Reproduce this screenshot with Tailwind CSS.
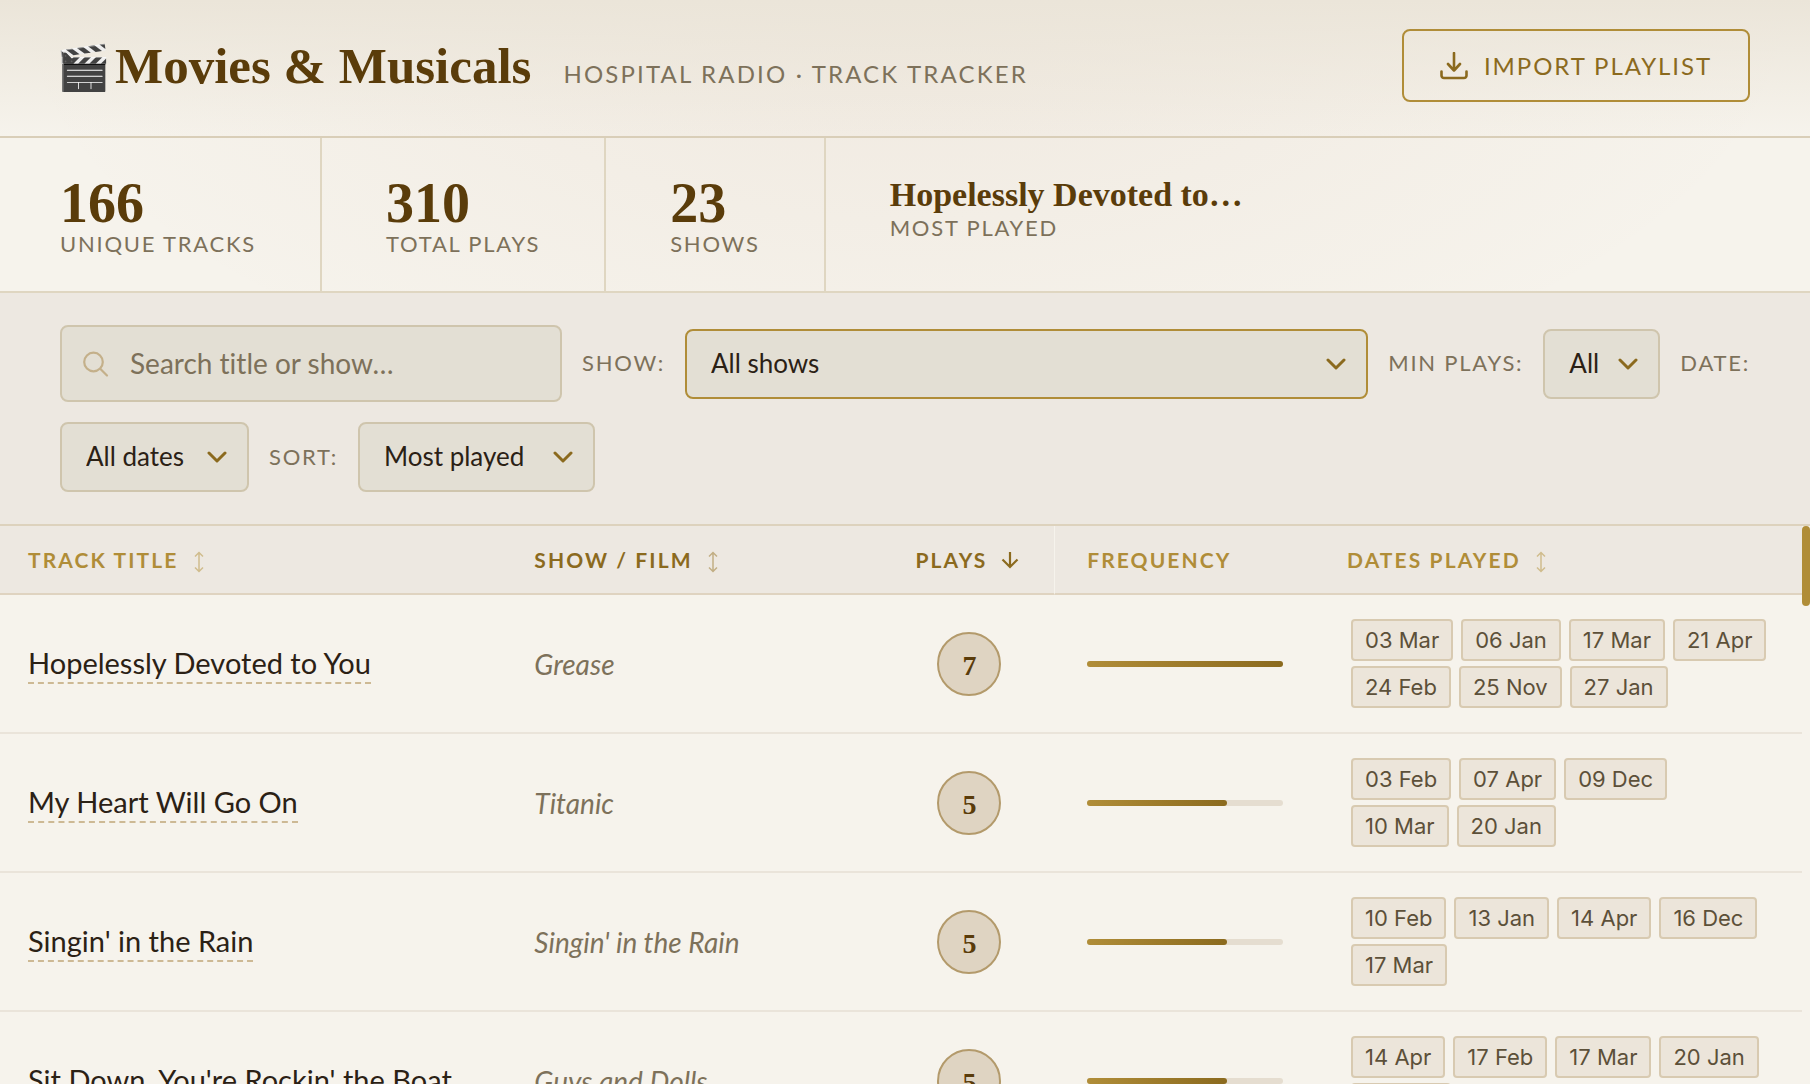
<!DOCTYPE html>
<html lang="en">
<head>
<meta charset="utf-8">
<title>Movies &amp; Musicals</title>
<script src="https://cdn.jsdelivr.net/npm/@tailwindcss/browser@4"></script>
</head>
<body class="flex h-screen flex-col overflow-hidden bg-[#f6f3ec] bg-[radial-gradient(ellipse_50%_40%_at_50%_0%,rgba(160,100,60,0.07)_0%,transparent_100%)] font-['Lato',sans-serif] text-[#2b2115] [font-variant-ligatures:none]">

<header class="flex shrink-0 items-center justify-between border-b-2 border-[#d9ceb8] bg-linear-to-b from-[#ebe5d9] to-transparent px-[60px] pt-[29px] pb-[34px]">
  <div class="flex items-baseline gap-8 pt-1 whitespace-nowrap">
    <h1 class="-ml-1 flex items-baseline gap-1 font-['Liberation_Serif',serif] text-[51px] leading-[60px] font-bold text-[#5a3c0a]"><span class="text-[44px]">🎬</span><span>Movies &amp; Musicals</span></h1>
    <p class="text-2xl tracking-[0.09em] text-[#7d715a]">HOSPITAL RADIO · TRACK TRACKER</p>
  </div>
  <button type="button" class="flex h-[73px] items-center gap-4 rounded-lg border-2 border-[#b08d38] px-9 text-2xl tracking-[0.08em] whitespace-nowrap text-[#8b6a1e]">
    <svg class="size-7" viewBox="0 0 28 28" fill="none" stroke="currentColor" stroke-width="2.6" stroke-linecap="round" stroke-linejoin="round"><path d="M14 1v17.500M8 12l6 6.500 6-6.500M1.500 19.500v4a2.500 2.500 0 0 0 2.500 2.500h20a2.500 2.500 0 0 0 2.500-2.500v-4"/></svg>
    IMPORT PLAYLIST
  </button>
</header>

<dl class="flex shrink-0 border-b-2 border-[#dfd6c1] pl-[60px] whitespace-nowrap text-[#7d715a]">
  <div class="flex flex-col border-r-2 border-[#dfd6c1] pt-[38px] pr-16 pb-[33px]">
    <dd class="font-['Liberation_Serif',serif] text-[56px] leading-[54px] font-bold text-[#5a3c0a]">166</dd>
    <dt class="text-[22px] leading-7 tracking-[0.08em]">UNIQUE TRACKS</dt>
  </div>
  <div class="flex flex-col border-r-2 border-[#dfd6c1] px-16 pt-[38px] pb-[33px]">
    <dd class="font-['Liberation_Serif',serif] text-[56px] leading-[54px] font-bold text-[#5a3c0a]">310</dd>
    <dt class="text-[22px] leading-7 tracking-[0.08em]">TOTAL PLAYS</dt>
  </div>
  <div class="flex flex-col border-r-2 border-[#dfd6c1] px-16 pt-[38px] pb-[33px]">
    <dd class="font-['Liberation_Serif',serif] text-[56px] leading-[54px] font-bold text-[#5a3c0a]">23</dd>
    <dt class="text-[22px] leading-7 tracking-[0.08em]">SHOWS</dt>
  </div>
  <div class="flex flex-col px-16 pt-[38px] pb-[33px]">
    <dd class="font-['Liberation_Serif',serif] text-[34px] leading-[38px] font-bold text-[#5a3c0a]">Hopelessly Devoted to…</dd>
    <dt class="text-[22px] leading-7 tracking-[0.08em]">MOST PLAYED</dt>
  </div>
</dl>

<form class="flex shrink-0 flex-wrap items-center gap-5 border-b-2 border-[#ddd2bd] bg-[#ede8e1] px-[60px] py-8 text-[26px]">
  <div class="relative w-[502px]">
    <svg class="pointer-events-none absolute top-1/2 left-[22px] size-7 -translate-y-1/2" viewBox="0 0 28 28" fill="none" stroke="#c4b08a" stroke-width="2.200" stroke-linecap="round"><circle cx="11.500" cy="12" r="9.300"/><path d="M18.500 19l6.500 6.500"/></svg>
    <input type="search" aria-label="Search title or show" placeholder="Search title or show…" class="h-[77px] w-full rounded-lg border-2 border-[#cfc5ad] bg-[#e3dfd4] pr-6 pb-[2px] pl-[68px] text-[28px] placeholder:text-[#7d715a]">
  </div>
  <label for="show" class="pb-[2px] text-[22px] tracking-[0.08em] text-[#7d715a]">SHOW:</label>
  <div class="relative grow basis-[640px]">
    <select id="show" class="h-[70px] w-full appearance-none rounded-lg border-2 border-[#b08d38] bg-[#e3dfd4] pr-[62px] pl-6"><option>All shows</option></select>
    <svg class="pointer-events-none absolute top-[29px] right-[22px] h-3 w-5" viewBox="0 0 20 12" fill="none" stroke="#8b6a1e" stroke-width="3" stroke-linecap="round" stroke-linejoin="round"><path d="M2 2l8 8 8-8"/></svg>
  </div>
  <label for="min" class="pb-[2px] text-[22px] tracking-[0.08em] text-[#7d715a]">MIN PLAYS:</label>
  <div class="relative">
    <select id="min" class="h-[70px] appearance-none rounded-lg border-2 border-[#cfc5ad] bg-[#e3dfd4] pr-[59px] pl-6"><option>All</option></select>
    <svg class="pointer-events-none absolute top-[29px] right-[22px] h-3 w-5" viewBox="0 0 20 12" fill="none" stroke="#8b6a1e" stroke-width="3" stroke-linecap="round" stroke-linejoin="round"><path d="M2 2l8 8 8-8"/></svg>
  </div>
  <label for="date" class="pb-[2px] text-[22px] tracking-[0.08em] text-[#7d715a]">DATE:</label>
  <div class="relative">
    <select id="date" class="h-[70px] appearance-none rounded-lg border-2 border-[#cfc5ad] bg-[#e3dfd4] pr-[62px] pb-[2px] pl-6"><option>All dates</option></select>
    <svg class="pointer-events-none absolute top-[29px] right-[22px] h-3 w-5" viewBox="0 0 20 12" fill="none" stroke="#8b6a1e" stroke-width="3" stroke-linecap="round" stroke-linejoin="round"><path d="M2 2l8 8 8-8"/></svg>
  </div>
  <label for="sort" class="pb-[2px] text-[22px] tracking-[0.08em] text-[#7d715a]">SORT:</label>
  <div class="relative">
    <select id="sort" class="h-[70px] appearance-none rounded-lg border-2 border-[#cfc5ad] bg-[#e3dfd4] pr-[68px] pb-[2px] pl-6"><option>Most played</option></select>
    <svg class="pointer-events-none absolute top-[29px] right-[22px] h-3 w-5" viewBox="0 0 20 12" fill="none" stroke="#8b6a1e" stroke-width="3" stroke-linecap="round" stroke-linejoin="round"><path d="M2 2l8 8 8-8"/></svg>
  </div>
</form>

<main class="relative min-h-0 grow overflow-hidden pr-2">
  <table class="w-full table-fixed border-separate border-spacing-0 text-left">
    <thead class="bg-[#ede8e1] text-[21px] tracking-widest whitespace-nowrap text-[#b08d38]">
      <tr class="h-[69px]">
        <th class="w-[28.1%] border-b-2 border-[#dfd3c0] px-7 font-bold"><button type="button" class="flex items-center gap-[14px] text-[#b08d38]">TRACK TITLE <svg class="mt-1 h-[22px] w-3" viewBox="0 0 12 22" fill="none" stroke="#d0bc8d" stroke-width="1.500"><path d="M6 2v18M2 5.500l4-4 4 4M2 16.500l4 4 4-4"/></svg></button></th>
        <th class="w-[21%] border-b-2 border-[#dfd3c0] px-7 font-bold"><button type="button" class="flex items-center gap-[14px] text-[#8b6a1e]">SHOW / FILM <svg class="mt-1 h-[22px] w-3" viewBox="0 0 12 22" fill="none" stroke="#c2ae84" stroke-width="1.500"><path d="M6 2v18M2 5.500l4-4 4 4M2 16.500l4 4 4-4"/></svg></button></th>
        <th class="w-[9.4%] border-b-2 border-[#dfd3c0] pr-8 pl-7 font-bold"><button type="button" class="flex w-full items-center justify-center gap-[14px] text-[#8b6a1e]">PLAYS <svg class="h-[18px] w-[18px] shrink-0" viewBox="0 0 18 18" fill="none" stroke="currentColor" stroke-width="2.200"><path d="M9 1v15M1.500 8.500L9 16l7.500-7.500"/></svg></button></th>
        <th class="w-[14.7%] border-b-2 border-l border-b-[#dfd3c0] border-l-[#f6f3ec] pr-9 pl-8 font-bold">FREQUENCY</th>
        <th class="border-b-2 border-[#dfd3c0] px-7 font-bold"><button type="button" class="flex items-center gap-[14px] text-[#b08d38]">DATES PLAYED <svg class="mt-1 h-[22px] w-3" viewBox="0 0 12 22" fill="none" stroke="#d0bc8d" stroke-width="1.500"><path d="M6 2v18M2 5.500l4-4 4 4M2 16.500l4 4 4-4"/></svg></button></th>
      </tr>
    </thead>
    <tbody id="tracks"></tbody>
  </table>
  <div class="absolute top-0 right-0 h-20 w-2 rounded bg-[#b08d38]"></div>
</main>

<script>
const tracks = [
  { title: "Hopelessly Devoted to You", show: "Grease", plays: 7, dates: [["03 Mar", "06 Jan", "17 Mar", "21 Apr"], ["24 Feb", "25 Nov", "27 Jan"]] },
  { title: "My Heart Will Go On", show: "Titanic", plays: 5, dates: [["03 Feb", "07 Apr", "09 Dec"], ["10 Mar", "20 Jan"]] },
  { title: "Singin' in the Rain", show: "Singin' in the Rain", plays: 5, dates: [["10 Feb", "13 Jan", "14 Apr", "16 Dec"], ["17 Mar"]] },
  { title: "Sit Down, You're Rockin' the Boat", show: "Guys and Dolls", plays: 5, dates: [["14 Apr", "17 Feb", "17 Mar", "20 Jan"], ["24 Feb"]] },
];
const most = Math.max(...tracks.map(t => t.plays));
const chip = d => `<span class="flex h-[42px] items-center rounded border-2 border-[#d8cab1] bg-[#ece5da] px-3">${d}</span>`;
document.getElementById("tracks").innerHTML = tracks.map(t => `
  <tr class="h-[139px]">
    <td class="border-b-2 border-[#eae4da] px-7 pb-[2px] text-[29px] whitespace-nowrap"><a href="#" class="border-b-2 border-dashed border-[#cdb994] pb-[2px]">${t.title}</a></td>
    <td class="border-b-2 border-[#eae4da] px-7 text-[28px] text-[#7d715a] italic">${t.show}</td>
    <td class="border-b-2 border-[#eae4da] px-7"><span class="mx-auto flex size-16 items-center justify-center rounded-full border-2 border-[#b39a6b] bg-[#dfd4c2] pt-1 font-['Liberation_Serif',serif] text-[28px] font-bold text-[#5a3c0a]">${t.plays}</span></td>
    <td class="border-b-2 border-[#eae4da] pr-9 pl-[33px]"><div class="h-[6px] rounded-full bg-[#e5ddd0]"><div class="h-full rounded-full bg-linear-to-r from-[#b08d38] to-[#8b6a1e]" style="width:${t.plays / most * 100}%"></div></div></td>
    <td class="border-b-2 border-[#eae4da] py-6 pl-8"><div class="flex flex-col gap-[5px] font-['Inter',sans-serif] text-[22px] whitespace-nowrap text-[#5c5039]">${t.dates.map(r => `<div class="flex gap-2">${r.map(chip).join("")}</div>`).join("")}</div></td>
  </tr>`).join("");
</script>
</body>
</html>
